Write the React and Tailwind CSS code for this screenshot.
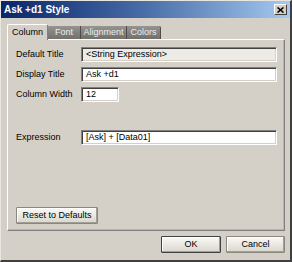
import React from 'react';

const font = { fontFamily: '"Liberation Sans", Arial, sans-serif' };

// sunken text field, classic Windows style
function Field({ value, width = 'w-[196px]', gray = false }) {
  return (
    <div
      className={`${width} h-[15px] flex items-center pl-[4px] text-[9px] text-black border-t border-l border-t-[#808080] border-l-[#808080] border-b border-r border-b-white border-r-white ${gray ? 'bg-[#ecebe6]' : 'bg-white'}`}
      style={{ boxShadow: 'inset 1px 1px 0 #404040, inset -1px -1px 0 #d4d0c8' }}
    >
      {value}
    </div>
  );
}

function Row({ label, children, className = '' }) {
  return (
    <div className={`flex items-center ${className}`}>
      <div className="w-[65px] text-[9px] text-black">{label}</div>
      {children}
    </div>
  );
}

function Button({ children, width, isDefault = false }) {
  return (
    <div
      className={`${width} h-[17px] flex items-center justify-center text-[9px] text-black bg-gradient-to-b from-[#fbfaf7] to-[#d9d6cd] rounded-[1px] border ${isDefault ? 'border-[#404040]' : 'border-[#8a877f]'}`}
      style={{ boxShadow: 'inset -1px -1px 0 #a29f97, inset 1px 1px 0 #ffffff' }}
    >
      {children}
    </div>
  );
}

export default function App() {
  return (
    <div
      className="w-[292px] h-[262px] bg-[#d4d0c8] flex flex-col border-l border-t border-l-[#e8e6e0] border-t-[#e8e6e0] border-r-2 border-b-2 border-r-[#404040] border-b-[#404040] overflow-hidden"
      style={font}
    >
      {/* title bar */}
      <div className="h-[17px] flex items-center justify-between pl-[3px] pr-[3px] bg-gradient-to-r from-[#0a246a] via-[#4a6ea8] to-[#a6caf0] shrink-0">
        <span className="text-white font-bold text-[10px]">Ask +d1 Style</span>
        <div
          className="w-[13px] h-[11px] bg-[#d4d0c8] flex items-center justify-center border-t border-l border-white border-r border-b border-r-[#404040] border-b-[#404040]"
        >
          <svg width="7" height="6" viewBox="0 0 7 6">
            <path d="M0.5 0.5 L6.5 5.5 M6.5 0.5 L0.5 5.5" stroke="#000" strokeWidth="1.6" />
          </svg>
        </div>
      </div>

      <div className="flex-1 flex flex-col pl-[6px] pr-[5px] pt-[6px]">
        {/* tabs */}
        <div className="flex items-end h-[15px] relative z-10">
          <div className="w-[41px] h-[16px] -mb-[1px] flex items-center justify-center text-[9px] text-black bg-[#d4d0c8] border-t border-l border-white border-r border-r-[#808080] rounded-t-[2px]">
            Column
          </div>
          <div className="w-[33px] h-[13px] flex items-center justify-center text-[9px] text-[#ececec] bg-gradient-to-b from-[#969490] to-[#72706c] border-r border-r-[#4e4c48]">
            Font
          </div>
          <div className="w-[46px] h-[13px] flex items-center justify-center text-[9px] text-[#ececec] bg-gradient-to-b from-[#969490] to-[#72706c] border-r border-r-[#4e4c48]">
            Alignment
          </div>
          <div className="w-[34px] h-[13px] flex items-center justify-center text-[9px] text-[#ececec] bg-gradient-to-b from-[#969490] to-[#72706c] border-r border-r-[#4e4c48] rounded-tr-[2px]">
            Colors
          </div>
        </div>

        {/* panel */}
        <div
          className="h-[192px] flex flex-col pl-[8px] pt-[7px] border-t border-l border-white border-r border-b border-r-[#808080] border-b-[#808080]"
          style={{ boxShadow: 'inset -1px -1px 0 #b8b5ad' }}
        >
          <Row label="Default Title">
            <Field value="<String Expression>" gray />
          </Row>
          <Row label="Display Title" className="mt-[5px]">
            <Field value="Ask +d1" />
          </Row>
          <Row label="Column Width" className="mt-[5px]">
            <Field value="12" width="w-[38px]" />
          </Row>
          <Row label="Expression" className="mt-[28px]">
            <Field value="[Ask] + [Data01]" />
          </Row>
          <div className="mt-[62px]">
            <Button width="w-[82px]">Reset to Defaults</Button>
          </div>
        </div>

        {/* dialog buttons */}
        <div className="flex justify-end gap-[5px] mt-[5px] pr-[0px]">
          <Button width="w-[60px]" isDefault>OK</Button>
          <Button width="w-[59px]">Cancel</Button>
        </div>
      </div>
    </div>
  );
}
